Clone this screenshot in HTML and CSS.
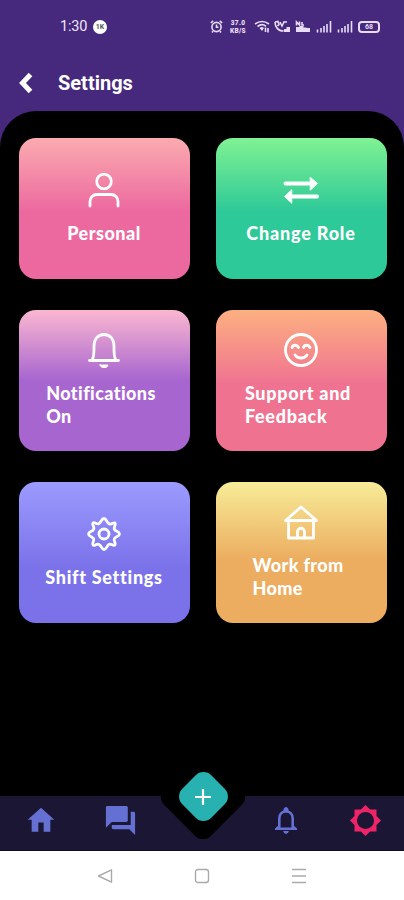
FILE: index.html
```
<!DOCTYPE html>
<html lang="en">
<head>
  <meta charset="UTF-8" />
  <meta name="viewport" content="width=device-width, initial-scale=1.0"/>
  <title>Settings</title>
  <link rel="stylesheet" href="styles.css">
</head>
<body>

  <header>
    <div class="status-bar">
      <span class="time">1:30</span>
      <span class="status-badge">1K</span>
      <div class="status-icons">
        <svg class="alarm" viewBox="0 0 13 13"><circle cx="6.5" cy="7" r="4.6"/><path d="M6.5 4.5V7.3H8.5M.8 3 3.2.9M12.2 3 9.8.9M3 11.3l-1 1.2M10 11.3l1 1.2"/></svg>
        <span class="net-speed"><span>37.0</span><span>KB/S</span></span>
        <svg class="wifi" viewBox="0 0 16 13"><path d="M1 4Q8-1 15 4M3.5 6.5Q8 3 12 6.3"/><path class="solid" d="M5.500 8Q8 6 10 8L8 11z"/><path d="M11.500 12V7.500M14 8v4.500"/></svg>
        <svg class="volte" viewBox="0 0 17 13"><path d="M1 2C1 7 4 11 9.500 11M1 2l3-.5 1 3L3.500 6M6 2l2 4 2-4M9 2h4"/><path class="solid" d="M10 12V9h2.500V7H16v5z"/></svg>
        <svg class="data" viewBox="0 0 16 13"><path d="M1.500 5.500V2l3 3V1.500M7 2v3h2"/><path class="solid" d="M1 12V7h3.500V6h4v1.500h3V8H15v4z"/></svg>
        <svg class="signal" viewBox="0 0 16 13"><path d="M1.500 9.500v3M5 8v4.500M8 6v6.500M11 4v8.500M14.500 1v11.500"/></svg>
        <svg class="signal" viewBox="0 0 16 13"><path d="M1.500 9.500v3M5 8v4.500M8 6v6.500M11 4v8.500M14.500 1v11.500"/></svg>
        <span class="battery">68</span>
      </div>
    </div>
    <div class="title-bar">
      <svg class="back" viewBox="0 0 14 22"><path d="M11.500 2.500 3.500 11l8 8.500"/></svg>
      <h1>Settings</h1>
    </div>
  </header>

  <main>
    <div class="card personal">
      <svg viewBox="0 0 36 36"><circle cx="18" cy="9.500" r="7.300"/><path d="M4 34v-4.500c0-4 3-7 7-7h14c4 0 7 3 7 7V34"/></svg>
      <span>Personal</span>
    </div>
    <div class="card role">
      <svg viewBox="0 0 36 36"><path class="arrow" d="M2.500 11.500H28M8 24.500h26"/><path class="solid" d="M27.500 5.500 34.500 11.500 27.500 18zM8.500 18 1.500 24.500 8.500 31z"/></svg>
      <span>Change Role</span>
    </div>
    <div class="card notifications">
      <svg viewBox="0 0 36 36"><path d="M3.500 28.500h29M6 28.500c2.300-4 2-9 2-14.500C8 7 12 2.500 18 2.500S28 7 28 14c0 5.500-.3 10.500 2 14.500"/><path class="solid" d="M14 33h8C22 36.500 14 36.500 14 33z"/></svg>
      <span>Notifications<br>On</span>
    </div>
    <div class="card support">
      <svg viewBox="0 0 36 36"><circle cx="18" cy="18" r="15.500"/><path d="M9 15.500c1-3 5-3 6.500 0M20.500 15.500c1-3 5-3 6.500 0M12 23c2.500 4 9.500 4 12 0"/></svg>
      <span>Support and<br>Feedback</span>
    </div>
    <div class="card shift">
      <svg viewBox="0 0 36 36"><circle cx="18" cy="18" r="5"/><path d="M18 2.500c2.600 0 2.400 4.500 5.200 5.400s4.300-1.900 5.800-.9c1.500 1.500-1.500 4-.7 6.200s5.200 2.200 5.200 4.800-4.200 2.200-5.200 4.800 2.200 4.700.7 6.200-3.600-1.500-5.800-.7-2.600 5.200-5.200 5.200-2.400-4.300-5.200-5.200-4.300 2.200-5.800.7 1.500-4 .7-6.200-5.200-2.200-5.200-4.800 4.200-2.200 5.200-4.800-2.200-4.700-.7-6.200 3.600 1.500 5.800.7 2.600-5.200 5.200-5.200z"/></svg>
      <span>Shift Settings</span>
    </div>
    <div class="card home">
      <svg viewBox="0 0 36 36"><path d="M5.500 16v18h25V16M2.500 16.500h31L18 3zM14.500 34v-6c0-5 7-5 7 0v6"/></svg>
      <span>Work from<br>Home</span>
    </div>
  </main>

  <nav>
    <svg class="nav-home" viewBox="0 0 24 24"><path d="M10 20.500v-7h4v7h5v-9h3L12 2.500l-10 9h3v9z"/></svg>
    <svg class="nav-chat" viewBox="0 0 24 24"><path d="M21 6h-2v9H6v2c0 .55.45 1 1 1h11l4 4V7c0-.55-.45-1-1-1zm-4 6V3c0-.55-.45-1-1-1H3c-.55 0-1 .45-1 1v14l4-4h10c.55 0 1-.45 1-1z"/></svg>
    <div class="add">
      <div class="notch"></div>
      <div class="diamond"></div>
      <svg viewBox="0 0 18 18"><path d="M9 1v16M1 9h16"/></svg>
    </div>
    <svg class="nav-bell" viewBox="0 0 24 28"><path d="M2.500 22.800h19M5.300 22V12.500c0-4 2.600-7 6.700-7s6.700 3 6.700 7V22"/><path class="solid" d="M9.500 5.500V3q2.500-4 5 0v2.500zM9 25h6q-1 3-3 3t-3-3zM1 24v-1.500L5 19v4H19v-4l4 3.500V24z"/></svg>
    <svg class="nav-settings" viewBox="0 0 24 24"><path d="M20 15.310 23.310 12 20 8.690V4h-4.690L12 .690 8.690 4H4v4.690L.690 12 4 15.310V20h4.690L12 23.310 15.310 20H20zM12 18.200a6.200 6.200 0 1 1 0-12.400 6.200 6.200 0 0 1 0 12.400z"/></svg>
  </nav>

  <footer>
    <svg viewBox="0 0 16 16"><path d="M14.500 1.800v12.400L1.500 8z"/></svg>
    <svg viewBox="0 0 16 16"><rect x="1.500" y="1.500" width="13" height="13" rx="2.500"/></svg>
    <svg viewBox="0 0 16 16"><path d="M1 1.500h14M1 8h14M1 14.500h14"/></svg>
  </footer>

</body>
</html>
```

FILE: styles.css
```
:root {
  --purple: #46287d;
  --nav: #1b1634;
  --nav-icon: #6571d2;
}

* {
  box-sizing: border-box;
}

body {
  background: var(--purple);
  color: white;
  font-family: Roboto, sans-serif;
  margin: 0;
  height: 900px;
  display: flex;
  flex-direction: column;
  overflow: hidden;
}

svg {
  display: block;
  flex: none;
  fill: none;
  stroke: white;
}

svg .solid {
  fill: white;
}

header {
  height: 111px;
  flex: none;
}

/* status bar */
.status-bar {
  height: 53px;
  padding: 0 24px 0 60px;
  display: flex;
  align-items: center;
}

.time {
  font-size: 14.5px;
  width: 33px;
  letter-spacing: -0.2px;
  color: #eee6fa;
}

.status-badge {
  width: 14px;
  height: 14px;
  border-radius: 50%;
  background: white;
  color: #555;
  font-size: 7px;
  font-weight: bold;
  line-height: 14px;
  text-align: center;
}

.status-icons {
  margin-left: auto;
  display: flex;
  align-items: center;
}

.status-icons svg {
  height: 13px;
  stroke: #e8dcf8;
  stroke-width: 1.6;
}

.status-icons .solid {
  fill: #e8dcf8;
  stroke: none;
}

.alarm { width: 13px; margin-right: 6px; }
.wifi { width: 16px; margin-right: 4px; }
.volte { width: 17px; margin-right: 4px; }
.data { width: 16px; margin-right: 5px; }
.signal { width: 16px; margin-right: 5px; }

.net-speed {
  width: 18px;
  margin-right: 7px;
  display: flex;
  flex-direction: column;
  align-items: center;
  font-size: 6.5px;
  font-weight: 900;
  line-height: 8px;
  letter-spacing: 0.3px;
  color: #e8dcf8;
}

.battery {
  width: 22px;
  height: 12px;
  border: 2px solid #e8dcf8;
  border-radius: 4px;
  font-size: 7px;
  font-weight: bold;
  line-height: 8px;
  text-align: center;
  color: #e8dcf8;
}

.title-bar {
  height: 60px;
  padding-left: 19px;
  display: flex;
  align-items: center;
}

.back {
  width: 14px;
  height: 22px;
  stroke-width: 5;
}

h1 {
  margin: 0 0 0 25px;
  font-size: 20px;
  font-weight: 700;
}

/* cards */
main {
  flex: none;
  height: 685px;
  padding: 27px 17px 0 19px;
  background: black;
  border-radius: 36px 36px 0 0;
  display: grid;
  grid-template-columns: 171px 171px;
  grid-auto-rows: 141px;
  gap: 31px 26px;
}

.card {
  padding: 0 1px 1px 0;
  border-radius: 17px;
  display: flex;
  flex-direction: column;
  align-items: center;
  justify-content: center;
  gap: 14px;
  font-family: Lato, sans-serif;
  font-size: 18px;
  font-weight: 900;
  line-height: 23px;
  white-space: nowrap;
}

.card svg {
  width: 36px;
  height: 36px;
  stroke-width: 2.8;
  stroke-linecap: round;
  stroke-linejoin: round;
}

.card .solid {
  stroke-width: 1;
}

.card .arrow {
  stroke-width: 4;
}

.personal { background: linear-gradient(#fbabb0, #ec699f 52%); letter-spacing: 0.5px; }
.role { background: linear-gradient(#80f293, #2ec998 52%); letter-spacing: 0.8px; }
.notifications { background: linear-gradient(#fbb7d0, #a765d0 50%); letter-spacing: 0.4px; }
.support { background: linear-gradient(#fdb081, #ef7391 52%); letter-spacing: 0.7px; }
.shift { background: linear-gradient(#9c9bff, #7b72e9 60%); letter-spacing: 0.7px; }
.home { background: linear-gradient(#f7ec98, #ecad60 55%); letter-spacing: 0.35px; }

/* wrapped labels keep some room after the last word */
.notifications span, .support span, .home span {
  padding-right: 6px;
}

/* bottom nav */
nav {
  flex: none;
  height: 55px;
  padding-bottom: 6px;
  background: var(--nav);
  border-bottom: 1px solid #0f0a2b;
  display: grid;
  grid-template-columns: 81px 79px 86px 80px 78px;
  align-items: center;
  justify-items: center;
}

nav > svg {
  fill: var(--nav-icon);
  stroke: none;
}

.nav-home { width: 32px; height: 33px; }
.nav-chat { width: 35px; height: 35px; }

.nav-bell {
  width: 24px;
  height: 28px;
  fill: none;
  stroke: var(--nav-icon);
  stroke-width: 2.6;
}

nav .nav-bell .solid {
  fill: var(--nav-icon);
  stroke: none;
}

nav .nav-settings {
  width: 33px;
  height: 33px;
  fill: #ef2468;
}

/* add button sits across the top edge of the nav */
.add {
  position: relative;
  align-self: start;
  width: 0;
  height: 0;
}

.notch, .diamond {
  position: absolute;
  border-radius: 11px;
  transform: rotate(45deg);
}

.notch {
  width: 66px;
  height: 66px;
  left: -33px;
  top: -32px;
  background: black;
}

.diamond {
  width: 41px;
  height: 41px;
  left: -20px;
  top: -20px;
  background: #27b2b1;
}

.add svg {
  position: absolute;
  width: 18px;
  height: 18px;
  left: -9px;
  top: -8px;
  stroke-width: 2.2;
}

/* system buttons */
footer {
  flex: 1;
  background: white;
  display: flex;
  justify-content: center;
  align-items: center;
  gap: 81px;
}

footer svg {
  width: 16px;
  height: 16px;
  stroke: #aaa;
  stroke-width: 1.4;
  stroke-linejoin: round;
}
```
